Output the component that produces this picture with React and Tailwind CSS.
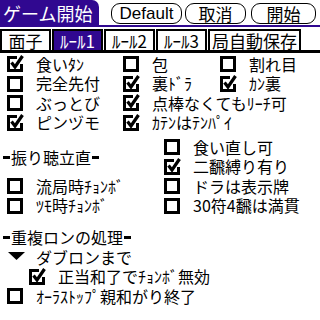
import React from "react";

function Box({ checked }) {
  return (
    <svg width="17" height="17" viewBox="0 0 17 17" className="shrink-0">
      {checked ? (
        <>
          <path d="M10 2.5H1.5V15.5H14.5V9" fill="none" stroke="black" strokeWidth="3" />
          <path d="M4.5 7.5L8 12L15.5 1" fill="none" stroke="black" strokeWidth="3.2" />
        </>
      ) : (
        <rect x="1.5" y="2.5" width="13" height="13" fill="none" stroke="black" strokeWidth="3" />
      )}
    </svg>
  );
}

function Check({ checked, label, className = "" }) {
  return (
    <div className={`flex h-[19.5px] items-center gap-[12px] whitespace-nowrap ${className}`}>
      <Box checked={checked} />
      <span>{label}</span>
    </div>
  );
}

function Heading({ children }) {
  return (
    <div className="flex h-[20px] items-center pl-[3px]">
      <span className="mr-[1px] inline-block h-[3px] w-[7px] bg-black" />
      <span>{children}</span>
      <span className="ml-[1px] inline-block h-[3px] w-[7px] bg-black" />
    </div>
  );
}

const tabs = [
  { label: "面子", w: "w-[51px]" },
  { label: "ﾙｰﾙ1", w: "w-[51px]", active: true },
  { label: "ﾙｰﾙ2", w: "w-[51px]" },
  { label: "ﾙｰﾙ3", w: "w-[51px]" },
  { label: "局自動保存", w: "w-[93px]" },
];

export default function App() {
  return (
    <div className="h-[320px] w-[320px] overflow-hidden bg-white text-[16px] leading-none text-black font-['Noto_Sans_CJK_JP',sans-serif]">
      {/* Title bar */}
      <div className="flex h-[25px]">
        <div className="z-10 h-[27px] w-[99px] rounded-tr-[7px] bg-[#300890] pl-[3px] text-[18px] leading-[27px] text-white">
          ゲーム開始
        </div>
        <div className="ml-[12px] mt-[3px] flex h-[21px] w-[71px] items-center justify-center rounded-[9px] border border-black font-['Liberation_Sans',sans-serif] text-[17px]">
          Default
        </div>
        <div className="ml-[3px] mt-[3px] flex h-[21px] w-[61px] items-center justify-center rounded-[9px] border border-black text-[17px]">
          取消
        </div>
        <div className="ml-[5px] mt-[3px] flex h-[21px] w-[65px] items-center justify-center rounded-[9px] border border-black text-[17px]">
          開始
        </div>
      </div>
      <div className="h-[2px] bg-[#300890]" />

      {/* Tabs */}
      <div className="mt-[2px] flex gap-[1px]">
        {tabs.map((t) => (
          <div
            key={t.label}
            className={`flex h-[21px] items-center justify-center whitespace-nowrap border-2 border-b-0 border-black text-[17px] ${t.w} ${
              t.active ? "bg-[#300890] text-white" : "bg-white"
            }`}
          >
            {t.label}
          </div>
        ))}
      </div>
      <div className="h-[3px] bg-black" />

      {/* Basic rules */}
      <div className="grid grid-cols-[116px_97px_1fr] pl-[7px] pt-[1px]">
        <Check checked label="食いﾀﾝ" />
        <Check label="包" />
        <Check label="割れ目" />
        <Check label="完全先付" />
        <Check checked label="裏ﾄﾞﾗ" />
        <Check checked label="ｶﾝ裏" />
        <Check label="ぶっとび" />
        <Check checked label="点棒なくてもﾘｰﾁ可" className="col-span-2" />
        <Check checked label="ピンヅモ" />
        <Check checked label="ｶﾃﾝはﾃﾝﾊﾟｲ" className="col-span-2" />
      </div>

      {/* Furiten riichi + options */}
      <div className="mt-[5px] flex">
        <div className="w-[157px]">
          <div className="pt-[10px] pb-[9px]">
            <Heading>振り聴立直</Heading>
          </div>
          <div className="pl-[7px]">
            <Check label="流局時ﾁｮﾝﾎﾞ" />
            <Check label="ﾂﾓ時ﾁｮﾝﾎﾞ" />
          </div>
        </div>
        <div className="pl-[7px]">
          <Check label="食い直し可" />
          <Check checked label="二飜縛り有り" />
          <Check label="ドラは表示牌" />
          <Check label="30符4飜は満貫" />
        </div>
      </div>

      {/* Double ron */}
      <div className="mt-[12px]">
        <Heading>重複ロンの処理</Heading>
        <div className="flex h-[19.5px] items-center gap-[11px] pl-[8px]">
          <svg width="17" height="10" viewBox="0 0 17 10" className="shrink-0">
            <polygon points="0,0 17,0 8.5,8" fill="black" />
          </svg>
          <span>ダブロンまで</span>
        </div>
        <Check checked label="正当和了でﾁｮﾝﾎﾞ無効" className="pl-[29px]" />
        <Check label="ｵｰﾗｽﾄｯﾌﾟ親和がり終了" className="pl-[7px]" />
      </div>
    </div>
  );
}
